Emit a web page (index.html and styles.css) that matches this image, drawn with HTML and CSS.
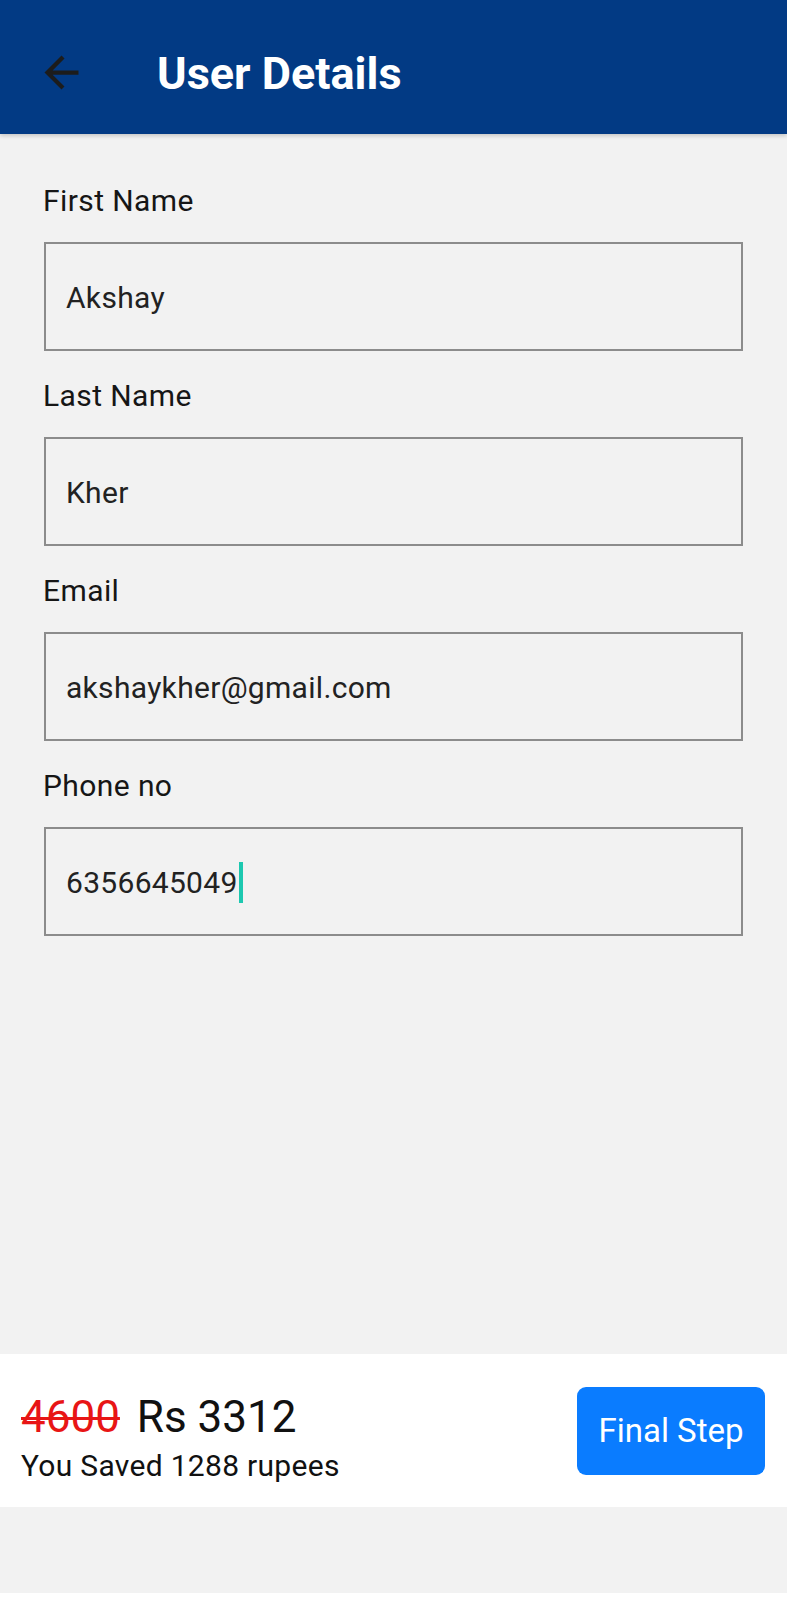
FILE: index.html
```html
<!DOCTYPE html>
<html lang="en">
<head>
<meta charset="utf-8">
<title>User Details</title>
<link rel="stylesheet" href="styles.css">
</head>
<body>
<div class="page">
  <header class="appbar">
    <svg class="back" viewBox="0 0 24 24" width="51" height="51" aria-hidden="true">
      <path d="M20 11H7.83l5.59-5.59L12 4l-8 8 8 8 1.41-1.41L7.83 13H20v-2z" fill="#1c1c1c"/>
    </svg>
    <h1 class="title">User Details</h1>
  </header>

  <main class="form">
    <div class="field">
      <label class="label">First Name</label>
      <div class="input">Akshay</div>
    </div>
    <div class="field">
      <label class="label">Last Name</label>
      <div class="input">Kher</div>
    </div>
    <div class="field">
      <label class="label">Email</label>
      <div class="input">akshaykher@gmail.com</div>
    </div>
    <div class="field">
      <label class="label">Phone no</label>
      <div class="input">6356645049<span class="caret"></span></div>
    </div>
  </main>

  <section class="bar">
    <div class="prices">
      <div class="price-line"><span class="old">4600</span> <span class="new">Rs 3312</span></div>
      <div class="saved">You Saved 1288 rupees</div>
    </div>
    <button class="btn">Final Step</button>
  </section>

  <div class="footer-space"></div>
  <div class="footer-strip"></div>
</div>
</body>
</html>
```

FILE: styles.css
```css
html, body {
  margin: 0;
  padding: 0;
}
body {
  background: #f2f2f2;
  font-family: Roboto, "Liberation Sans", sans-serif;
  color: #1a1a1a;
}
.page {
  display: flex;
  flex-direction: column;
  min-height: 1600px;
}
.appbar {
  height: 134px;
  box-sizing: border-box;
  background: #023a84;
  display: flex;
  align-items: center;
  padding: 14px 0 0 36px;
  box-shadow: 0 2px 4px rgba(0, 0, 0, 0.18);
  position: relative;
  z-index: 1;
}
.back {
  display: block;
  flex: none;
  margin-top: -4px;
}
.title {
  margin: 0 0 0 70px;
  font-size: 45px;
  line-height: 52px;
  font-weight: 700;
  letter-spacing: 0;
  color: #ffffff;
}
.form {
  flex: 1;
  padding: 49px 44px 0 44px;
  display: flex;
  flex-direction: column;
  gap: 27px;
}
.field {
  display: flex;
  flex-direction: column;
  gap: 23px;
}
.label {
  font-size: 30px;
  line-height: 36px;
  letter-spacing: 0.4px;
  color: #161616;
  margin-left: -1px;
}
.input {
  height: 109px;
  box-sizing: border-box;
  border: 2px solid #8c8c8c;
  display: flex;
  align-items: center;
  padding: 2px 0 0 20px;
  font-size: 30px;
  letter-spacing: 0.3px;
  color: #222222;
}
.caret {
  display: inline-block;
  width: 4px;
  height: 41px;
  background: #1dc8b0;
  margin-left: 1px;
}
.bar {
  height: 153px;
  box-sizing: border-box;
  background: #ffffff;
  display: flex;
  align-items: center;
  justify-content: space-between;
  padding: 0 22px 0 21px;
}
.prices {
  padding-top: 14px;
}
.price-line {
  font-size: 44px;
  line-height: 50px;
  white-space: nowrap;
}
.old {
  color: #e81515;
  text-decoration: line-through;
  text-decoration-thickness: 3px;
}
.new {
  color: #111111;
  margin-left: 6px;
}
.saved {
  margin-top: 6px;
  font-size: 30px;
  line-height: 36px;
  letter-spacing: 0.3px;
  color: #111111;
}
.btn {
  width: 188px;
  height: 88px;
  border: none;
  border-radius: 9px;
  background: #0a7cff;
  color: #ffffff;
  font-family: Roboto, "Liberation Sans", sans-serif;
  font-size: 33px;
  padding: 0;
}
.footer-space {
  height: 86px;
}
.footer-strip {
  height: 7px;
  background: #ffffff;
}
```
